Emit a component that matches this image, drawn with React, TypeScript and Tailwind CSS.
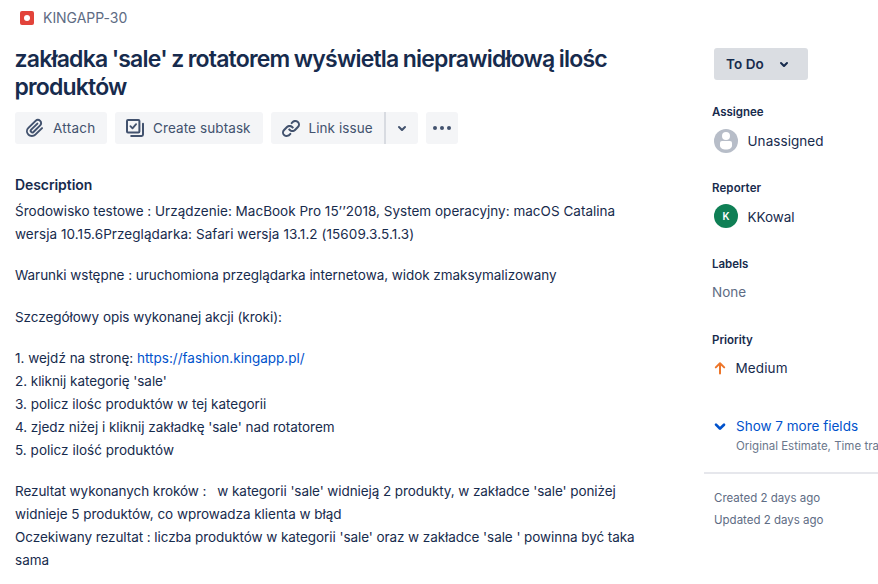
import type { ReactNode } from "react";

function Chevron({ className }: { className: string }) {
  return (
    <svg viewBox="0 0 24 24" className={className} fill="currentColor">
      <path d="M8.292 10.293a1.009 1.009 0 000 1.419l2.939 2.965c.218.215.5.322.779.322s.556-.107.769-.322l2.93-2.955a1.01 1.01 0 000-1.419.987.987 0 00-1.406 0l-2.298 2.317-2.307-2.327a.99.99 0 00-1.406 0z" />
    </svg>
  );
}

function AttachIcon() {
  return (
    <svg viewBox="0 0 24 24" className="size-6" fill="currentColor">
      <path d="M11.643 17.965c-1.53 1.495-4.016 1.496-5.542.004a3.773 3.773 0 01.002-5.412l7.147-6.985a2.316 2.316 0 013.233-.003c.893.873.895 2.282.004 3.153l-6.703 6.55a.653.653 0 01-.914-.008.62.62 0 010-.902l6.229-6.087a.941.941 0 000-1.353.995.995 0 00-1.384 0l-6.23 6.087a2.502 2.502 0 000 3.607 2.643 2.643 0 003.683.009l6.703-6.55a4.074 4.074 0 00-.003-5.859 4.306 4.306 0 00-6.002.003l-7.148 6.985a5.655 5.655 0 00-.001 8.118c2.29 2.237 6.015 2.238 8.308-.003l6.71-6.557a.94.94 0 000-1.353.995.995 0 00-1.384 0l-6.71 6.557z" />
    </svg>
  );
}

function SubtaskIcon() {
  return (
    <svg viewBox="0 0 24 24" className="size-6" fill="none" stroke="currentColor" strokeWidth="2" strokeLinecap="round" strokeLinejoin="round">
      <rect x="4" y="4" width="12.4" height="12.4" rx="1" />
      <path d="M7.4 10.2l2.1 2.1 3.6-4.2" strokeWidth="1.8" />
      <path d="M20 7.8V18.6a1.4 1.4 0 01-1.4 1.4H8.2" />
    </svg>
  );
}

function LinkIcon() {
  return (
    <svg viewBox="0 0 24 24" className="size-6" fill="currentColor">
      <path d="M12.856 5.457l-.937.92a1.002 1.002 0 000 1.437 1.047 1.047 0 001.463 0l.984-.966c.967-.95 2.542-1.135 3.602-.288a2.54 2.54 0 01.203 3.81l-2.903 2.852a2.646 2.646 0 01-3.696 0l-1.11-1.09L9 13.57l1.108 1.089c1.822 1.788 4.802 1.788 6.622 0l2.905-2.852a4.558 4.558 0 00-.357-6.82c-1.893-1.517-4.695-1.226-6.422.47" />
      <path d="M11.144 19.543l.937-.92a1.002 1.002 0 000-1.437 1.047 1.047 0 00-1.462 0l-.985.966c-.967.95-2.542 1.135-3.602.288a2.54 2.54 0 01-.203-3.81l2.903-2.852a2.646 2.646 0 013.696 0l1.11 1.09L15 11.43l-1.108-1.089c-1.822-1.788-4.802-1.788-6.622 0l-2.905 2.852a4.558 4.558 0 00.357 6.82c1.893 1.517 4.695 1.226 6.422-.47" />
    </svg>
  );
}

function Field({ label, labelClass, children }: { label: string; labelClass: string; children: ReactNode }) {
  return (
    <section className="h-[76px]">
      <h3 className={`h-4 text-[11.5px] leading-4 font-semibold ${labelClass}`}>{label}</h3>
      <div className="mt-[9px] flex h-6 items-center">{children}</div>
    </section>
  );
}

export default function App() {
  return (
    <div className="flex h-[584px] w-[878px] overflow-hidden bg-white font-['Inter','Liberation_Sans',sans-serif] text-[13.5px] whitespace-pre text-[#172B4D]">
      <main className="w-[704px] shrink-0 pl-[15px]">
        <div className="mt-[6px] flex h-6 items-center pl-[5px] text-[#5E6C84]">
          <span className="flex size-[14px] items-center justify-center rounded-[2px] bg-[#E2433A]">
            <span className="size-[6px] rounded-full bg-white" />
          </span>
          <span className="mb-[2px] ml-[9px] text-[14px] tracking-[-0.03px]">KINGAPP-30</span>
        </div>

        <h1 className="mt-[15px] -ml-[0.5px] text-[23px] leading-7 font-semibold">
          <span className="block tracking-[-0.79px] [word-spacing:-0.7px]">zakładka 'sale' z rotatorem wyświetla nieprawidłową ilośc</span>
          <span className="block tracking-[-0.82px]">produktów</span>
        </h1>

        <div className="mt-[11px] flex h-8 gap-2 text-[#42526E]">
          <button className="flex w-[92px] items-center rounded-[3px] bg-[#F4F5F7] pl-2">
            <AttachIcon />
            <span className="ml-[6px] tracking-[0.28px]">Attach</span>
          </button>
          <button className="flex w-[148px] items-center rounded-[3px] bg-[#F4F5F7] pl-2">
            <SubtaskIcon />
            <span className="ml-[6px] tracking-[0.1px]">Create subtask</span>
          </button>
          <div className="flex w-[147px]">
            <button className="flex w-[113px] items-center rounded-l-[3px] bg-[#F4F5F7] pl-2">
              <LinkIcon />
              <span className="ml-[5.5px] tracking-[0.08px]">Link issue</span>
            </button>
            <span className="w-[2px] bg-[#D8DBE1]" />
            <button className="flex flex-1 items-center justify-center rounded-r-[3px] bg-[#F4F5F7]">
              <Chevron className="size-6" />
            </button>
          </div>
          <button className="flex w-8 items-center justify-center gap-[3px] rounded-[3px] bg-[#F4F5F7]">
            <span className="size-1 rounded-full bg-[#42526E]" />
            <span className="size-1 rounded-full bg-[#42526E]" />
            <span className="size-1 rounded-full bg-[#42526E]" />
          </button>
        </div>

        <h2 className="mt-[31px] h-5 text-[14px] leading-5 font-semibold tracking-[-0.08px]">Description</h2>
        <div className="mt-[5px] leading-[23px]">
          <p>
            <span className="block tracking-[0.015px]">Środowisko testowe : Urządzenie: MacBook Pro 15’’2018, System operacyjny: macOS Catalina</span>
            <span className="block tracking-[0.07px]">wersja 10.15.6Przeglądarka: Safari wersja 13.1.2 (15609.3.5.1.3)</span>
          </p>
          <p className="mt-[18px] tracking-[-0.05px]">Warunki wstępne : uruchomiona przeglądarka internetowa, widok zmaksymalizowany</p>
          <p className="mt-[19px] tracking-[-0.05px]">Szczegółowy opis wykonanej akcji (kroki):</p>
          <p className="mt-[18px]">
            <span className="block">1. wejdź na stronę: <a className="text-[#0052CC]">https://fashion.kingapp.pl/</a></span>
            <span className="block tracking-[-0.05px]">2. kliknij kategorię 'sale'</span>
            <span className="block tracking-[-0.015px]">3. policz ilośc produktów w tej kategorii</span>
            <span className="block tracking-[-0.04px]">4. zjedz niżej i kliknij zakładkę 'sale' nad rotatorem</span>
            <span className="block tracking-[0.02px]">5. policz ilość produktów</span>
          </p>
          <p className="mt-[18px]">
            <span className="block tracking-[-0.08px]">{"Rezultat wykonanych kroków :\u00a0\u00a0\u00a0w kategorii 'sale' widnieją 2 produkty, w zakładce 'sale' poniżej"}</span>
            <span className="block tracking-[-0.043px]">widnieje 5 produktów, co wprowadza klienta w błąd</span>
            <span className="block tracking-[-0.07px]">Oczekiwany rezultat : liczba produktów w kategorii 'sale' oraz w zakładce 'sale ' powinna być taka</span>
            <span className="block">sama</span>
          </p>
        </div>
      </main>

      <aside className="w-[174px] shrink-0 overflow-hidden pt-12">
        <button className="ml-[10px] flex h-8 w-[94px] items-center rounded-[3px] bg-[#DADDE2] pl-3 font-semibold">
          <span className="w-[46px] text-left tracking-[0.08px]">To Do</span>
          <Chevron className="size-6" />
        </button>

        <div className="mt-6 pl-2">
          <Field label="Assignee" labelClass="tracking-[-0.03px]">
            <svg viewBox="0 0 24 24" className="ml-[2px] size-6">
              <circle cx="12" cy="12" r="12" fill="#B7BDC8" />
              <circle cx="12" cy="7.1" r="4" fill="white" />
              <path d="M8 12h8a2 2 0 012 2v2.5c0 2.5-2.5 4-6 4s-6-1.5-6-4V14a2 2 0 012-2z" fill="white" />
            </svg>
            <span className="ml-[9.5px] tracking-[0.06px]">Unassigned</span>
          </Field>
          <Field label="Reporter" labelClass="tracking-[0.1px]">
            <span className="mb-[2px] ml-[2px] flex size-6 items-center justify-center rounded-full bg-[#0F7F55] text-[10px] font-semibold text-white">K</span>
            <span className="ml-[9.5px] tracking-[-0.05px]">KKowal</span>
          </Field>
          <Field label="Labels" labelClass="tracking-[-0.02px]">
            <span className="mb-[2px] tracking-[0.03px] text-[#5E6C84]">None</span>
          </Field>
          <Field label="Priority" labelClass="tracking-normal">
            <svg viewBox="0 0 16 16" className="size-4" fill="none" stroke="#ED7529" strokeWidth="2" strokeLinecap="round" strokeLinejoin="round">
              <path d="M8 12.6V2.6M3.8 6.4L8 2.3l4.2 4.1" />
            </svg>
            <span className="mb-[2px] ml-[7.5px] tracking-[0.13px]">Medium</span>
          </Field>
        </div>

        <div className="mt-[6px] flex">
          <span className="flex h-6 w-8 items-center justify-center text-[#0052CC]">
            <Chevron className="size-8 shrink-0" />
          </span>
          <div>
            <div className="h-6 leading-6 text-[#0052CC]">Show 7 more fields</div>
            <div className="h-4 text-[11.5px] leading-4 text-[#6B778C]">Original Estimate, Time tracking</div>
          </div>
        </div>

        <div className="mt-[18px] h-[2px] bg-[#E6E7EC]" />
        <div className="mt-[13px] pl-[10px] text-[11.5px] leading-[22px] text-[#5E6C84]">
          <div>Created 2 days ago</div>
          <div>Updated 2 days ago</div>
        </div>
      </aside>
    </div>
  );
}
